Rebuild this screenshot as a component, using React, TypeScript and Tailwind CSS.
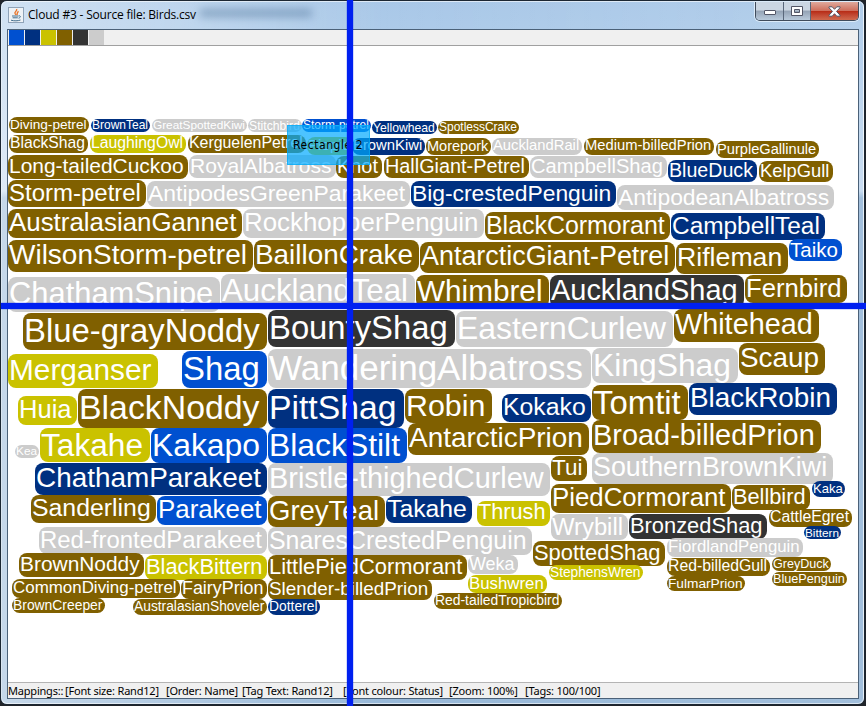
import React from "react";

type Tone = "brown" | "navy" | "yellow" | "blue" | "dark" | "grey";
// text, tone, left, right, top, height
type Tag = [string, Tone, number, number, number, number];

const TONES: Record<Tone, string> = {
  blue: "bg-[#0050d0]",
  navy: "bg-[#003080]",
  yellow: "bg-[#cac200]",
  brown: "bg-[#806000]",
  dark: "bg-[#333333]",
  grey: "bg-[#cccccc]",
};

const TAGS: Tag[] = [
  ["Diving-petrel", "brown", 9, 89, 117, 16],
  ["BrownTeal", "navy", 91, 150, 119, 13],
  ["GreatSpottedKiwi", "grey", 152, 247, 119, 13],
  ["Stitchbird", "grey", 248, 302, 119, 13],
  ["Storm-petrel", "blue", 302, 371, 119, 13],
  ["Yellowhead", "navy", 372, 437, 121, 13],
  ["SpotlessCrake", "brown", 438, 519, 121, 13],
  ["BlackShag", "brown", 9, 88, 135, 18],
  ["LaughingOwl", "yellow", 90, 186, 135, 18],
  ["KerguelenPetrel", "brown", 188, 306, 135, 18],
  ["Piopio", "yellow", 307, 353, 137, 18],
  ["BrownKiwi", "navy", 352, 425, 138, 17],
  ["Morepork", "brown", 426, 491, 138, 17],
  ["AucklandRail", "grey", 492, 582, 138, 17],
  ["Medium-billedPrion", "brown", 584, 714, 138, 17],
  ["PurpleGallinule", "brown", 716, 819, 141, 17],
  ["Long-tailedCuckoo", "brown", 8, 188, 155, 24],
  ["RoyalAlbatross", "grey", 189, 336, 155, 23],
  ["Knot", "brown", 336, 382, 156, 22],
  ["HallGiant-Petrel", "brown", 384, 529, 156, 22],
  ["CampbellShag", "grey", 530, 667, 156, 22],
  ["BlueDuck", "navy", 668, 757, 160, 22],
  ["KelpGull", "brown", 759, 833, 161, 21],
  ["Storm-petrel", "brown", 8, 146, 180, 27],
  ["AntipodesGreenParakeet", "grey", 147, 410, 181, 26],
  ["Big-crestedPenguin", "navy", 411, 616, 181, 26],
  ["AntipodeanAlbatross", "grey", 617, 834, 185, 25],
  ["AustralasianGannet", "brown", 8, 242, 209, 29],
  ["RockhopperPenguin", "grey", 243, 484, 209, 29],
  ["BlackCormorant", "brown", 485, 670, 212, 28],
  ["CampbellTeal", "navy", 671, 825, 213, 27],
  ["WilsonStorm-petrel", "brown", 8, 253, 240, 32],
  ["BaillonCrake", "brown", 254, 419, 240, 32],
  ["AntarcticGiant-Petrel", "brown", 420, 675, 242, 31],
  ["Rifleman", "brown", 676, 788, 243, 31],
  ["Taiko", "blue", 789, 842, 239, 22],
  ["ChathamSnipe", "grey", 8, 220, 277, 35],
  ["AucklandTeal", "grey", 221, 415, 274, 34],
  ["Whimbrel", "brown", 416, 549, 275, 33],
  ["AucklandShag", "dark", 550, 744, 275, 33],
  ["Fernbird", "brown", 745, 847, 275, 28],
  ["Blue-grayNoddy", "brown", 23, 267, 313, 37],
  ["BountyShag", "dark", 268, 455, 310, 37],
  ["EasternCurlew", "grey", 456, 673, 311, 36],
  ["Whitehead", "brown", 674, 819, 309, 33],
  ["Merganser", "yellow", 8, 158, 354, 34],
  ["Shag", "blue", 182, 267, 351, 37],
  ["WanderingAlbatross", "grey", 268, 591, 349, 39],
  ["KingShag", "grey", 592, 738, 348, 35],
  ["Scaup", "brown", 739, 825, 343, 32],
  ["Huia", "yellow", 18, 77, 396, 29],
  ["BlackNoddy", "brown", 78, 267, 389, 39],
  ["PittShag", "navy", 268, 404, 389, 39],
  ["Robin", "brown", 405, 492, 389, 34],
  ["Kokako", "navy", 502, 591, 394, 28],
  ["Tomtit", "brown", 592, 688, 385, 35],
  ["BlackRobin", "navy", 689, 837, 383, 32],
  ["Kea", "grey", 15, 39, 445, 13],
  ["Takahe", "yellow", 40, 150, 428, 34],
  ["Kakapo", "blue", 151, 267, 428, 35],
  ["BlackStilt", "blue", 268, 407, 428, 35],
  ["AntarcticPrion", "brown", 408, 589, 423, 32],
  ["Broad-billedPrion", "brown", 592, 821, 420, 33],
  ["ChathamParakeet", "navy", 35, 267, 463, 32],
  ["Bristle-thighedCurlew", "grey", 268, 550, 463, 33],
  ["Tui", "brown", 551, 587, 456, 25],
  ["SouthernBrownKiwi", "grey", 592, 833, 453, 31],
  ["Sanderling", "brown", 31, 156, 495, 28],
  ["Parakeet", "blue", 157, 267, 496, 29],
  ["GreyTeal", "brown", 268, 385, 496, 31],
  ["Takahe", "navy", 386, 472, 496, 27],
  ["Thrush", "yellow", 477, 550, 501, 25],
  ["PiedCormorant", "brown", 551, 731, 484, 29],
  ["Bellbird", "brown", 732, 810, 485, 25],
  ["Kaka", "navy", 812, 845, 481, 16],
  ["CattleEgret", "brown", 769, 852, 509, 18],
  ["Bittern", "navy", 804, 841, 526, 13],
  ["Wrybill", "grey", 551, 628, 514, 26],
  ["BronzedShag", "dark", 629, 767, 514, 25],
  ["Red-frontedParakeet", "grey", 39, 267, 527, 27],
  ["SnaresCrestedPenguin", "grey", 268, 532, 527, 28],
  ["SpottedShag", "brown", 533, 665, 541, 25],
  ["FiordlandPenguin", "grey", 667, 803, 538, 19],
  ["BrownNoddy", "brown", 19, 144, 553, 24],
  ["BlackBittern", "yellow", 145, 267, 555, 25],
  ["LittlePiedCormorant", "brown", 268, 467, 555, 25],
  ["Weka", "grey", 468, 518, 555, 19],
  ["StephensWren", "yellow", 549, 643, 565, 15],
  ["Red-billedGull", "brown", 667, 770, 558, 18],
  ["GreyDuck", "brown", 772, 831, 557, 14],
  ["CommonDiving-petrel", "brown", 12, 180, 579, 19],
  ["FairyPrion", "brown", 181, 267, 579, 20],
  ["Slender-billedPrion", "brown", 268, 432, 579, 21],
  ["Bushwren", "yellow", 468, 547, 575, 18],
  ["FulmarPrion", "brown", 667, 745, 576, 15],
  ["BluePenguin", "brown", 772, 847, 572, 14],
  ["BrownCreeper", "brown", 12, 105, 598, 15],
  ["AustralasianShoveler", "brown", 133, 267, 599, 16],
  ["Dotterel", "navy", 268, 320, 599, 16],
  ["Red-tailedTropicbird", "brown", 434, 562, 593, 16],
];

const CANVAS_LEFT = 8;
const CANVAS_TOP = 46;

const ctx = document.createElement("canvas").getContext("2d")!;
ctx.font = '200px "Liberation Sans"';

// Width of the text for a font size of one pixel
const unitWidth = (text: string) => ctx.measureText(text).width / 200;

function CloudTag({ tag }: { tag: Tag }) {
  const [text, tone, left, right, top, height] = tag;
  const size = (right - left) / (unitWidth(text) + 0.25);
  return (
    <div
      className={`absolute whitespace-nowrap text-white ${TONES[tone]}`}
      style={{
        left: left - CANVAS_LEFT,
        top: top - CANVAS_TOP,
        width: right - left,
        height,
        fontSize: size,
        lineHeight: `${size * 1.149}px`,
        borderRadius: Math.min(8, height / 2),
      }}
    >
      <span className="relative block pl-px" style={{ top: -size * 0.035 }}>
        {text}
      </span>
    </div>
  );
}

function JavaIcon() {
  return (
    <svg width="16" height="16" viewBox="0 0 16 16" className="shrink-0">
      <rect x="0.5" y="0.5" width="15" height="15" fill="#eef2f6" stroke="#8fa3b8" />
      <path d="M8.6 2c1 2-2.600 2.800-1.500 4.600l.9 1.200M10.600 4.300C8.300 5.500 9.800 6.400 8.900 8" fill="none" stroke="#e8762c" strokeWidth="1.400" />
      <path d="M4 9h6.500M4.600 10.800h5.200M3 13.200c3 .9 7 .8 9.500-.2M10.800 8.800c2.400-.3 1.900 2-.3 2.400" fill="none" stroke="#44708f" strokeWidth="1" />
    </svg>
  );
}

function WindowButtons() {
  return (
    <div className="flex h-[19px] w-[104px] overflow-hidden rounded-b-[5px] border border-t-0 border-[#404c5c] shadow-[0_0_0_1px_#dcebf9]">
      <div className="flex w-7 items-center justify-center border-r border-[#59677a] bg-linear-to-b from-[#cbd6e2] from-45% via-[#94a3b5] via-50% to-[#b9cadb]">
        <svg width="12" height="6" viewBox="0 0 12 6" className="mt-1">
          <rect x="0.5" y="0.5" width="11" height="4" rx="0.5" fill="#fff" stroke="#535666" />
        </svg>
      </div>
      <div className="flex w-[27px] items-center justify-center border-r border-[#59677a] bg-linear-to-b from-[#cbd6e2] from-45% via-[#94a3b5] via-50% to-[#b9cadb]">
        <svg width="12" height="10" viewBox="0 0 12 10">
          <path d="M.5 .5h11v9H.5zM3.500 3.500v3h5v-3z" fill="#fff" fillRule="evenodd" stroke="#535666" />
        </svg>
      </div>
      <div className="flex flex-1 items-center justify-center bg-linear-to-b from-[#dfa99c] from-0% via-[#cf7260] via-45% to-[#d0694c]">
        <div className="flex h-full w-full items-center justify-center bg-linear-to-b from-transparent from-48% via-[#b72a14] via-50% to-transparent">
          <svg width="13" height="11" viewBox="0 0 13 11">
            <path d="M1 .8h3.200l2.300 2.500L8.800.8H12v1L8.500 5.400 12 9.200v1H8.800L6.500 7.700l-2.300 2.500H1v-1l3.500-3.800L1 1.800z" fill="#fff" stroke="#535666" strokeWidth="1" />
          </svg>
        </div>
      </div>
    </div>
  );
}

function TitleBar() {
  return (
    <div className="flex h-[27px] items-start justify-between">
      <div className="flex items-center gap-1 pt-1 pl-px">
        <JavaIcon />
        <span className="w-[168px] whitespace-nowrap font-['Open_Sans','Noto_Sans',sans-serif] text-[12px] leading-[18px] tracking-[-0.2px] text-black">
          Cloud #3 - Source file: Birds.csv
        </span>
        <span className="mb-1 h-2 w-28 bg-[#456b91]/45 blur-[4px]" />
      </div>
      <WindowButtons />
    </div>
  );
}

function Legend() {
  const tones: Tone[] = ["blue", "navy", "yellow", "brown", "dark", "grey"];
  return (
    <div className="flex h-4 gap-px border-b border-[#a0a0a0] bg-[#f0f0f0] pl-px">
      {tones.map((tone) => (
        <div key={tone} className={`h-[15px] w-[15px] ${TONES[tone]}`} />
      ))}
    </div>
  );
}

const STATUS: [string, number][] = [
  ["Mappings::", 57],
  ["[Font size: Rand12]", 101],
  ["[Order: Name]", 76],
  ["[Tag Text: Rand12]", 101],
  ["[Font colour: Status]", 106],
  ["[Zoom: 100%]", 76],
  ["[Tags: 100/100]", 80],
];

function StatusBar() {
  return (
    <div className="flex h-4 items-center border-t border-[#b4b4b4] bg-[#f0f0f0] font-['Noto_Sans',sans-serif] text-[11px] leading-[14px] tracking-[-0.2px] text-black">
      {STATUS.map(([text, width]) => (
        <span key={text} className="shrink-0 whitespace-nowrap" style={{ width }}>
          {text}
        </span>
      ))}
    </div>
  );
}

export default function App() {
  return (
    <div className="relative h-[706px] w-[866px] overflow-hidden bg-[#20242a]">
      <div className="h-[705px] w-[865px] rounded-[7px] border border-[#1c2733] bg-linear-to-b from-[#a9c8e8] from-0% via-[#c3d9f0] via-27% to-[#98b9d9] to-28%">
        <div className="flex h-full flex-col rounded-[6px] border border-white/60 bg-linear-to-r from-white/45 via-white/0 via-45% to-white/10 pr-1 pb-1 pl-[5px]">
          <TitleBar />
          <div className="flex min-h-0 flex-1 flex-col border border-[#4b6178] bg-white">
            <Legend />
            <div className="relative flex-1 bg-white font-['Liberation_Sans',Arial,sans-serif]">
              {TAGS.map((tag, i) => (
                <CloudTag key={i} tag={tag} />
              ))}
            </div>
            <StatusBar />
          </div>
        </div>
      </div>
      <div className="absolute top-[125px] left-[287px] flex h-[40px] w-[83px] items-center border border-[#00aaf5]/60 bg-[#00aaff]/70 pl-[5px] font-['DejaVu_Sans_Condensed','DejaVu_Sans',sans-serif] text-[12px] tracking-[0.55px] whitespace-nowrap text-black">
        Rectangle 2
      </div>
      <div className="absolute top-0 left-[347px] h-full w-[6px] bg-[#0020f0] shadow-[0_0_1px_#0020f0]" />
      <div className="absolute top-[303px] left-[1px] h-[6px] w-full bg-[#0020f0] shadow-[0_0_1px_#0020f0]" />
    </div>
  );
}
